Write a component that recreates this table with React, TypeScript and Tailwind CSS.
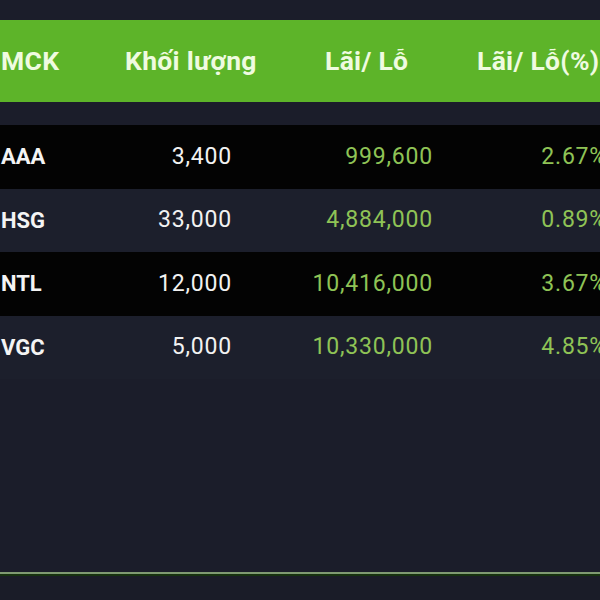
const rows = [
  { code: 'AAA', vol: '3,400', pl: '999,600', pct: '2.67%' },
  { code: 'HSG', vol: '33,000', pl: '4,884,000', pct: '0.89%' },
  { code: 'NTL', vol: '12,000', pl: '10,416,000', pct: '3.67%' },
  { code: 'VGC', vol: '5,000', pl: '10,330,000', pct: '4.85%' },
];

export default function App() {
  return (
    <div
      className="w-[600px] h-[600px] overflow-hidden bg-[#1b1d2a] flex flex-col"
      style={{ fontFamily: 'Roboto, "Noto Sans", sans-serif' }}
    >
      <div className="h-[20px] shrink-0" />
      {/* header */}
      <div className="h-[82px] shrink-0 bg-[#5db429] flex items-center text-[26.5px] font-bold text-[#effbe0] whitespace-nowrap tracking-[0.3px]">
        <div className="w-[125px] shrink-0 pl-[1px]">MCK</div>
        <div className="w-[200px] shrink-0">Khối lượng</div>
        <div className="w-[152px] shrink-0">Lãi/ Lỗ</div>
        <div className="shrink-0">Lãi/ Lỗ(%)</div>
      </div>
      <div className="h-[23px] shrink-0" />
      {/* rows */}
      {rows.map((r, i) => (
        <div
          key={r.code}
          className={`h-[63.5px] shrink-0 flex items-center text-[23px] whitespace-nowrap ${
            i % 2 === 0 ? 'bg-[#030303]' : 'bg-[#1c1f2c]'
          }`}
        >
          <div className="w-[100px] shrink-0 pl-[1px] font-bold text-[#f4f4f4] text-[22px]">{r.code}</div>
          <div className="w-[132px] shrink-0 text-right text-[#f2f2f2] tracking-[0.8px]">{r.vol}</div>
          <div className="w-[201px] shrink-0 text-right text-[#8fc356] tracking-[0.8px]">{r.pl}</div>
          <div className="w-[174px] shrink-0 text-right text-[#8fc356] tracking-[0.8px]">{r.pct}</div>
        </div>
      ))}
      <div className="flex-1" />
      {/* bottom divider */}
      <div className="h-[2px] shrink-0 bg-[#7f9a72]" />
      <div className="h-[2px] shrink-0 bg-[#16310f]" />
      <div className="h-[24px] shrink-0 bg-[#1a1c28]" />
    </div>
  );
}
